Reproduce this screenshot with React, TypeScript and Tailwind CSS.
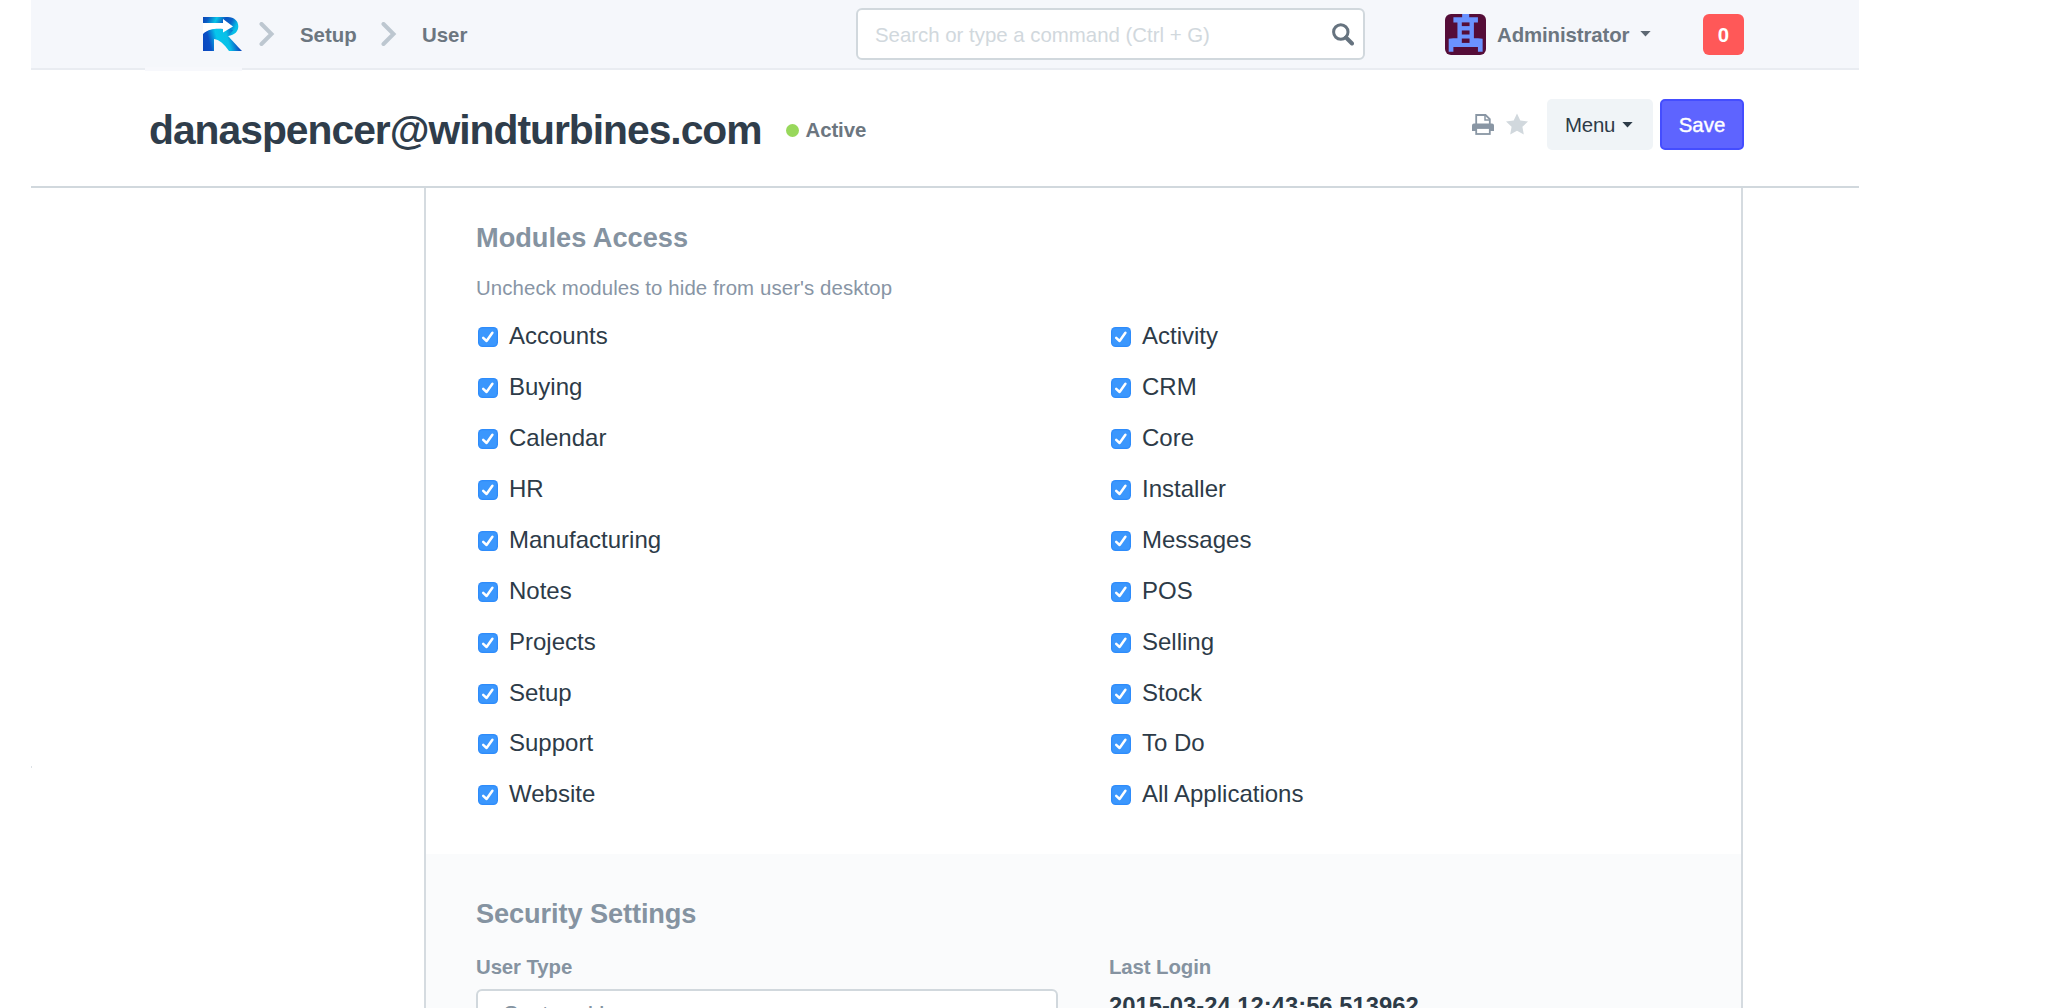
const leftModules = ['Accounts', 'Buying', 'Calendar', 'HR', 'Manufacturing', 'Notes', 'Projects', 'Setup', 'Support', 'Website'];
const rightModules = ['Activity', 'CRM', 'Core', 'Installer', 'Messages', 'POS', 'Selling', 'Stock', 'To Do', 'All Applications'];

function Logo() {
  return (
    <svg viewBox="0 0 39 34" className="block h-[34px] w-[39px]">
      <defs>
        <linearGradient id="bowl" x1="0" y1="0" x2="1" y2="0.25">
          <stop offset="0" stopColor="#0b45b5" />
          <stop offset="0.15" stopColor="#0a5cc4" />
          <stop offset="0.38" stopColor="#08c4e6" />
          <stop offset="0.62" stopColor="#0a55c2" />
          <stop offset="0.8" stopColor="#0a62c8" />
          <stop offset="1" stopColor="#08bfe8" />
        </linearGradient>
        <linearGradient id="leg" x1="0" y1="0.9" x2="1" y2="0.75">
          <stop offset="0" stopColor="#0b47bd" />
          <stop offset="0.2" stopColor="#0b50c6" />
          <stop offset="0.42" stopColor="#06c6ec" />
          <stop offset="0.68" stopColor="#08c0e8" />
          <stop offset="0.9" stopColor="#0b55c4" />
          <stop offset="1" stopColor="#0b47bd" />
        </linearGradient>
      </defs>
      <path d="M0 0H25C31 0 35.300 4 35.300 9.300C35.300 14.500 32 18 25 19L18 15L0 10Z" fill="url(#bowl)" />
      <path d="M0 16C6 11 14 11 21 12L30 13L25 19C28 22 34 29 39 34H26C21 27 17 23 11 22V34H0Z" fill="url(#leg)" />
      <path d="M0 6H20V2L30 9.500L20 15.500V12C12 11.500 5 12 0 17Z" fill="#fff" />
    </svg>
  );
}

function Chevron() {
  return (
    <svg viewBox="0 0 16 24" className="block h-[24px] w-[16px] shrink-0">
      <path d="M2.500 2L12.500 12L2.500 22" fill="none" stroke="#bdc7d0" strokeWidth="4" strokeLinecap="round" strokeLinejoin="miter" />
    </svg>
  );
}

function Avatar() {
  return (
    <svg viewBox="0 0 122 122" className="block size-[41px] rounded-[6px]">
      <rect width="122" height="122" fill="#550d38" />
      <path d="M51 0H72V10H98V25H86V72H98L112 74V112H98V98H25V112H11V74L25 72H37V25H25V10H51Z" fill="#6b93ff" />
      <g fill="#550d38">
        <rect x="50" y="25" width="23" height="11" />
        <rect x="50" y="49" width="23" height="12" />
        <rect x="50" y="73" width="23" height="13" />
      </g>
    </svg>
  );
}

function Caret({ className }: { className: string }) {
  return (
    <svg viewBox="0 0 12 7" className={className}>
      <path d="M0 0H12L6 6.500Z" fill="currentColor" />
    </svg>
  );
}

function Check({ label }: { label: string }) {
  return (
    <label className="flex h-[50.940px] items-center">
      <svg viewBox="0 0 20 20" className="ml-[2px] size-[20px] shrink-0">
        <rect x="0" y="0" width="20" height="20" rx="4.500" fill="#2e8cfb" />
        <rect x="1.200" y="1.200" width="17.600" height="17.600" rx="3.500" fill="#3b97fd" />
        <path d="M5.200 10.800L8.600 14L14.400 5.800" fill="none" stroke="#fff" strokeWidth="2.500" strokeLinecap="round" strokeLinejoin="round" />
      </svg>
      <span className="ml-[11px] pb-[2px] text-[24px] leading-none whitespace-nowrap">{label}</span>
    </label>
  );
}

export default function App() {
  return (
    <div className="h-screen overflow-hidden bg-white font-['Liberation_Sans',Arial,sans-serif] text-[20.4px] leading-none text-[#2d3b48]">
      <div className="relative ml-[31px] flex h-full w-[1828px] flex-col">
        <nav className="relative flex h-[70px] shrink-0 items-start border-b-2 border-[#e9ecf1] bg-[#f5f7fb]">
          <span className="absolute top-[67px] left-[114px] h-[4px] w-[97px] bg-[#f7f8fc]" />
          <div className="flex h-[70px] w-[825px] shrink-0 items-center pl-[172px] font-bold text-[#6c7680]">
            <div className="-mt-[2px]"><Logo /></div>
            <div className="-mt-[2px] ml-[17px]"><Chevron /></div>
            <span className="ml-[25px] w-[57px]">Setup</span>
            <div className="-mt-[2px] ml-[24px]"><Chevron /></div>
            <span className="ml-[25px]">User</span>
          </div>
          <div className="mt-[8px] flex h-[52px] w-[509px] shrink-0 items-center justify-between rounded-[6px] border-2 border-[#d1d8dd] bg-white pr-[9px] pl-[17px] text-[#d1d8dd]">
            <span className="pt-[2px]">Search or type a command (Ctrl + G)</span>
            <svg viewBox="0 0 22 23" className="h-[23px] w-[22px]" fill="none" stroke="#66737f">
              <circle cx="8.800" cy="9" r="7.200" strokeWidth="3" />
              <path d="M14 14.500L20 20.500" strokeWidth="4" strokeLinecap="round" />
            </svg>
          </div>
          <div className="mt-[13.500px] ml-[80px] flex h-[41px] shrink-0 items-center font-bold text-[#6c7680]">
            <Avatar />
            <span className="ml-[11px] w-[133px] pt-[3px] tracking-[-0.1px]">Administrator</span>
            <Caret className="-mt-[1px] ml-[10px] h-[6px] w-[11px] text-[#5d6873]" />
            <span className="ml-[52px] flex size-[41px] items-center justify-center rounded-[6px] bg-[#ff5858] pt-[2px] text-white">0</span>
          </div>
        </nav>
        <header className="flex h-[118px] shrink-0 items-start justify-between border-b-2 border-[#d1d8dd] pr-[115px] pl-[118px]">
          <div className="mt-[35px] flex h-[50px] items-center font-bold">
            <h1 className="text-[40.8px] leading-none tracking-[-1px] text-[#2f3d4b]">danaspencer@windturbines.com</h1>
            <span className="ml-[24px] size-[13px] rounded-full bg-[#98d85b]" />
            <span className="ml-[7px] tracking-[-0.1px] text-[#6c7680]">Active</span>
          </div>
          <div className="mt-[28.500px] flex h-[51px] items-center">
            <svg viewBox="0 0 22 21" className="h-[21px] w-[22px]" fill="none" stroke="#8996a4">
              <path d="M4.200 10V1H13.500L17.800 5.200V10" strokeWidth="1.800" />
              <path d="M13 1V6H18" strokeWidth="1.500" />
              <path d="M0 17V11.500Q0 9.500 2 9.500H20Q22 9.500 22 11.500V17H18V14H4V17Z" fill="#8996a4" stroke="none" />
              <rect x="4.200" y="14" width="13.600" height="6" strokeWidth="1.800" />
            </svg>
            <svg viewBox="0 0 22 21" className="ml-[12px] h-[22px] w-[22px]">
              <path d="M11 0L14.300 7L22 8L16.400 13.300L17.800 21L11 17.300L4.200 21L5.600 13.300L0 8L7.700 7Z" fill="#d1d8dd" />
            </svg>
            <button className="ml-[19px] flex h-[51px] w-[106px] items-center rounded-[5px] bg-[#f0f4f7] pt-[2px] pl-[18px] text-[#2d3b48]">
              <span className="tracking-[-0.200px]">Menu</span>
              <Caret className="ml-[7px] h-[6px] w-[11px]" />
            </button>
            <button className="ml-[7px] flex h-[51px] w-[84px] items-center justify-center rounded-[5px] border-2 border-[#444dff] bg-[#5e64ff] pt-[2px] text-white [-webkit-text-stroke:0.4px_white]">Save</button>
          </div>
        </header>
        <main className="ml-[393px] flex w-[1319px] flex-1 flex-col border-x-2 border-[#d5dbe0]">
          <section className="h-[666px] shrink-0 px-[50px] pt-[36px]">
            <h2 className="text-[27.200px] leading-[28px] font-bold text-[#8593a1]">Modules Access</h2>
            <p className="mt-[26px] leading-[20px] tracking-[0.1px] text-[#8895a5]">Uncheck modules to hide from user's desktop</p>
            <div className="mt-[13.500px] grid grid-cols-[633px_1fr]">
              <div>{leftModules.map((m) => <Check key={m} label={m} />)}</div>
              <div>{rightModules.map((m) => <Check key={m} label={m} />)}</div>
            </div>
          </section>
          <section className="flex-1 bg-[#fafbfc] px-[50px] pt-[46px]">
            <h2 className="text-[27.200px] leading-[28px] font-bold tracking-[-0.1px] text-[#8593a1]">Security Settings</h2>
            <div className="mt-[29px] grid grid-cols-[633px_1fr] font-bold text-[#8593a1]">
              <div>
                <div className="leading-[20px] tracking-[-0.1px]">User Type</div>
                <div className="mt-[12px] h-[51px] w-[582px] rounded-[6px] border-2 border-[#d1d8dd] bg-white px-[25px] pt-[12px] text-[23.800px] font-normal tracking-[-0.200px]">System User</div>
              </div>
              <div>
                <div className="leading-[20px] tracking-[-0.1px]">Last Login</div>
                <div className="mt-[17px] text-[23.800px] leading-[24px] text-[#2d3b48]">2015-03-24 12:43:56.513962</div>
              </div>
            </div>
          </section>
        </main>
        <span className="absolute top-[766px] left-0 h-[2px] w-px bg-[#dde2e6]" />
      </div>
    </div>
  );
}
